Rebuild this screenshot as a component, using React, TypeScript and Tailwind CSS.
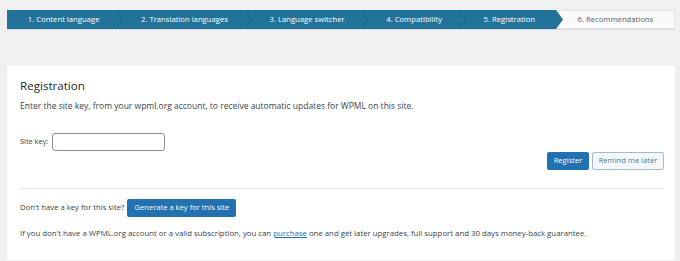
import React from 'react'

const steps = [
  '1. Content language',
  '2. Translation languages',
  '3. Language switcher',
  '4. Compatibility',
  '5. Registration',
  '6. Recommendations',
]

const ACTIVE = 4

function Step({ label, index }: { label: string; index: number }) {
  const done = index <= ACTIVE
  const isActive = index === ACTIVE
  const isLast = index === steps.length - 1

  return (
    <div
      className={`relative flex flex-auto items-center justify-center whitespace-nowrap ${
        done ? 'bg-[#22739a] text-white' : 'bg-[#fafafa] text-[#62676c] border border-[#e2e4e7]'
      }`}
    >
      {label}
      {/* chevron between steps */}
      {done && !isActive && !isLast && (
        <svg className="absolute right-[-4px] top-0 z-10" width="9" height="19" viewBox="0 0 9 19">
          <polyline points="0.5,0 8,9.5 0.5,19" fill="none" stroke="#1b5f80" strokeWidth="1" />
        </svg>
      )}
      {isActive && (
        <svg className="absolute right-[-7px] top-0 z-10" width="7" height="19" viewBox="0 0 7 19">
          <polygon points="0,0 7,9.5 0,19" fill="#22739a" />
        </svg>
      )}
    </div>
  )
}

export default function App() {
  return (
    <div
      className="w-[680px] h-[261px] overflow-hidden bg-[#f0f0f1] pl-[7px] pr-[5px] pt-[10px] text-[#3c434a]"
      style={{ fontFamily: '"Open Sans", "Noto Sans", sans-serif' }}
    >
      {/* Wizard steps */}
      <div className="flex h-[19px] text-[7.7px] shadow-[0_1px_0_#dcdcde]">
        {steps.map((s, i) => (
          <Step key={s} label={s} index={i} />
        ))}
      </div>

      {/* Registration box */}
      <div className="mt-[37px] bg-white pl-[13px] pr-[11px] pt-[12px] pb-[21px]">
        <h2 className="text-[11.6px] leading-[16px] text-[#23282d]">Registration</h2>
        <p className="mt-[6px] text-[8.5px] leading-[11px]">
          Enter the site key, from your wpml.org account, to receive automatic updates for WPML on this site.
        </p>

        <div className="mt-[22px] flex items-center gap-[4px] text-[7.4px] text-[#3c434a]">
          <span>Site key:</span>
          <input
            type="text"
            className="h-[18px] w-[113px] rounded-[3px] border border-[#8c8f94] bg-white outline-none"
          />
        </div>

        <div className="mt-[1px] flex justify-end gap-[3px] text-[7.6px]">
          <button className="h-[18px] w-[42px] rounded-[2px] bg-[#2271b1] text-white">Register</button>
          <button className="h-[18px] w-[72px] rounded-[2px] border border-[#9dbbd8] bg-[#f6f7f7] text-[#4a7cab]">
            Remind me later
          </button>
        </div>

        <div className="mt-[18px] border-t border-[#e2e4e7]" />

        <div className="mt-[10px] flex items-center gap-[3px] text-[7.7px]">
          <span>Don't have a key for this site?</span>
          <button className="h-[18px] w-[109px] rounded-[2px] bg-[#2271b1] text-[7.6px] text-white">
            Generate a key for this site
          </button>
        </div>

        <p className="mt-[11px] text-[7.8px] leading-[11px]">
          If you don't have a WPML.org account or a valid subscription, you can{' '}
          <a href="#" className="text-[#2271b1] underline">
            purchase
          </a>{' '}
          one and get later upgrades, full support and 30 days money-back guarantee.
        </p>
      </div>
    </div>
  )
}
